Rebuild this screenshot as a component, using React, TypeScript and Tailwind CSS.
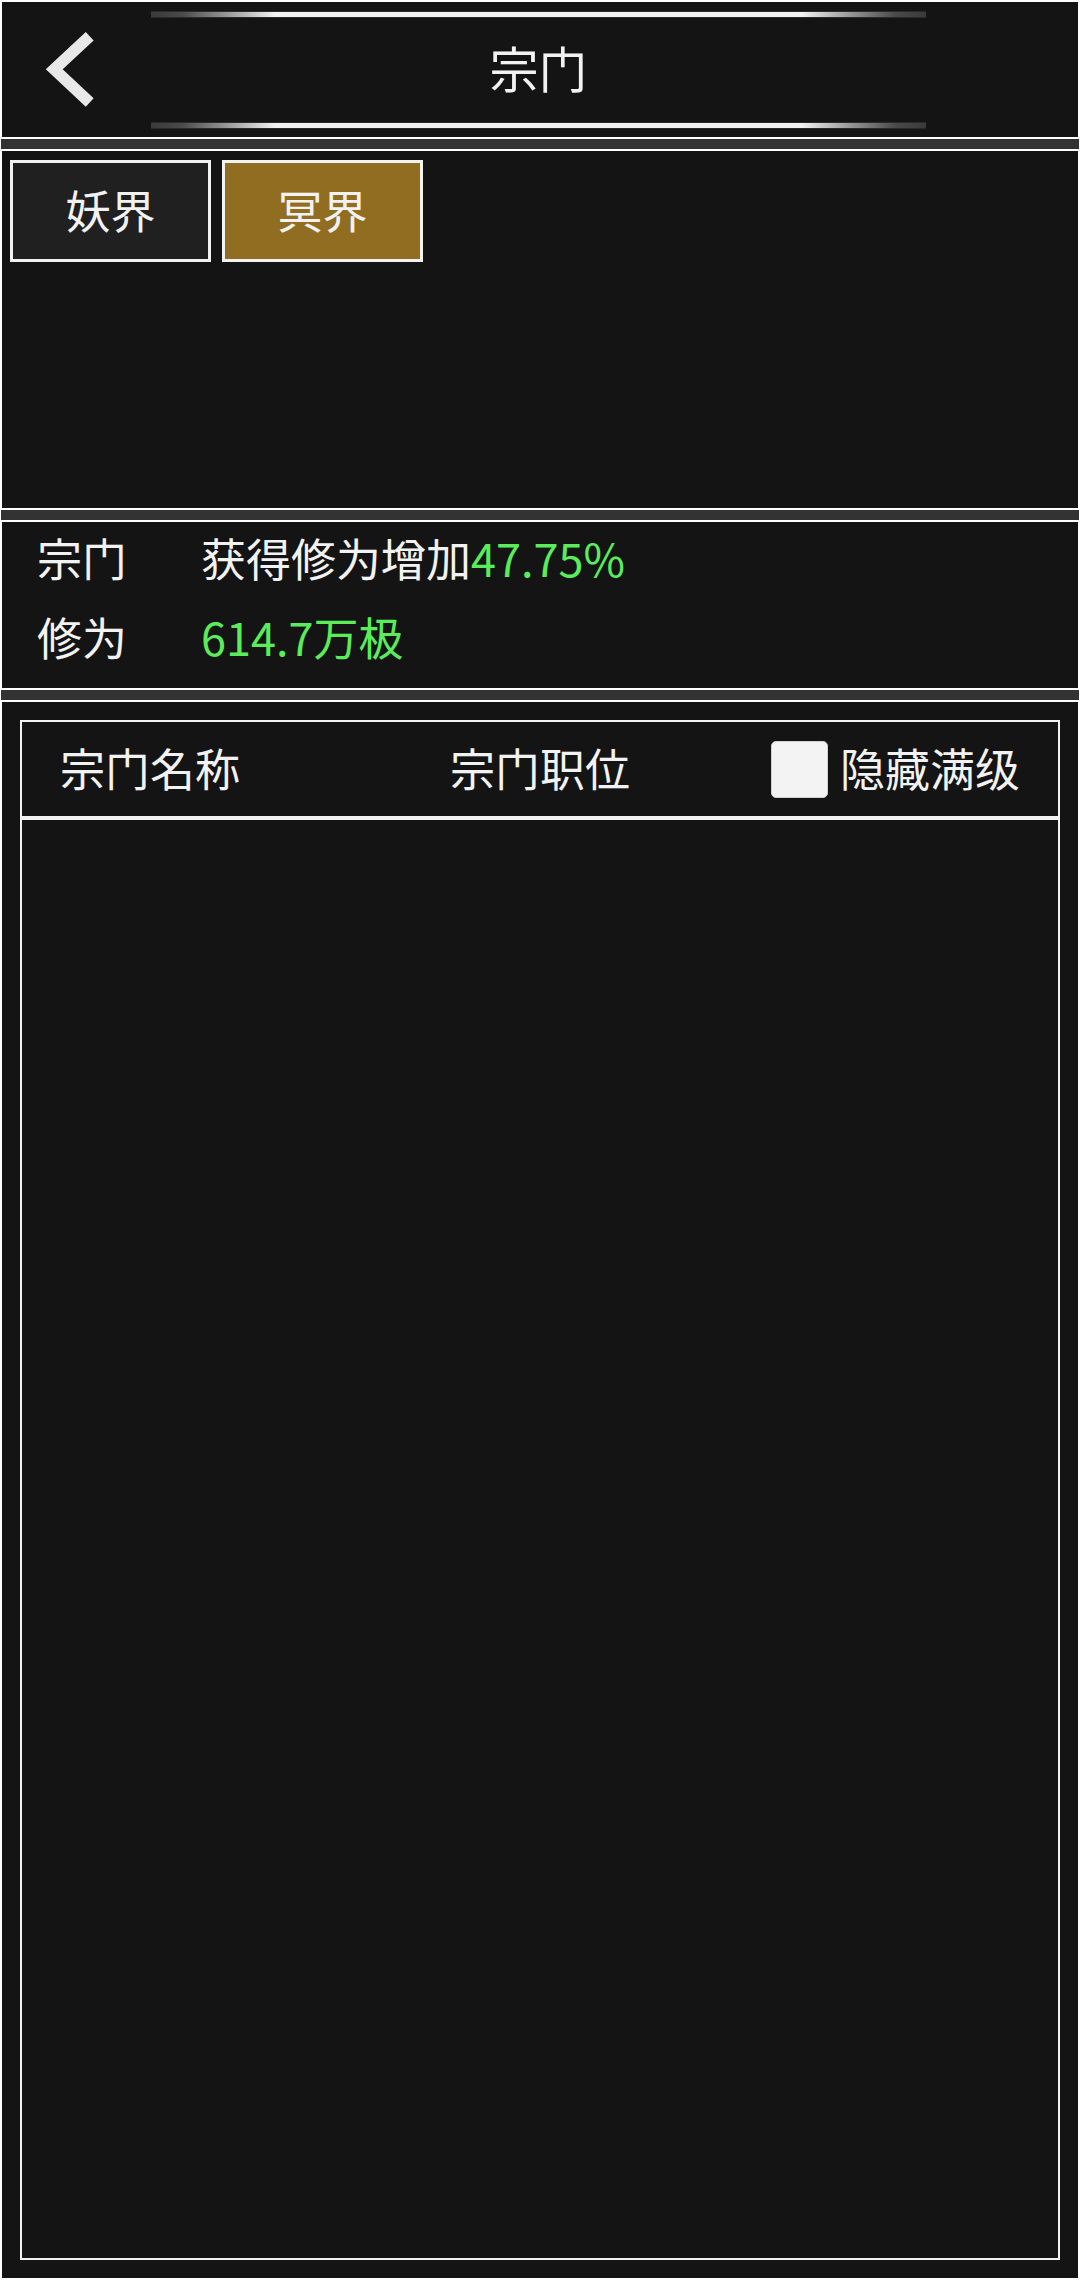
import React from "react";

function DecoLine() {
  return (
    <div className="h-[7px] w-full bg-[linear-gradient(to_right,#3a3a3a_0%,#4a4a4a_4%,#9a9a9a_10%,#f2f2f2_16%,#f2f2f2_84%,#9a9a9a_90%,#4a4a4a_96%,#3a3a3a_100%)] border-y border-[#2a2a2a]" />
  );
}

function GrayBar() {
  return <div className="h-[10px] -mx-px bg-[#333333]" />;
}

export default function App() {
  return (
    <div className="w-[1080px] h-[2280px] bg-white p-[2px] flex flex-col gap-[2px] text-[#f2f2f2] [font-family:'Noto_Sans_CJK_JP','Noto_Sans_CJK_SC',sans-serif]">
      {/* Header */}
      <div className="h-[135px] bg-[#141414] flex flex-row">
        <div className="w-[149px] h-full">
          <svg width="149" height="135" viewBox="0 0 149 135">
            <path
              d="M87.7 34.2 L52.2 67.3 L87.7 100.5"
              fill="none"
              stroke="#e8e8e8"
              strokeWidth="11.5"
              strokeLinecap="butt"
              strokeLinejoin="miter"
            />
          </svg>
        </div>
        <div className="w-[775px] h-full flex flex-col justify-between pt-[9px] pb-[8px]">
          <DecoLine />
          <div className="flex-1 flex items-center justify-center text-[49px] leading-none pb-[8px]">
            宗门
          </div>
          <DecoLine />
        </div>
      </div>

      <GrayBar />

      {/* Tabs panel */}
      <div className="h-[357px] bg-[#141414] pt-[9px] pl-[8px]">
        <div className="flex flex-row gap-[11px]">
          <div className="w-[201px] h-[102px] border-[3px] border-[#f2f2f2] bg-[#202020] flex items-center justify-center text-[45px] leading-none pb-[3px]">
            妖界
          </div>
          <div className="w-[201px] h-[102px] border-[3px] border-[#f2f2f2] bg-[#916d22] flex items-center justify-center text-[45px] leading-none pb-[3px]">
            冥界
          </div>
        </div>
      </div>

      <GrayBar />

      {/* Stats panel */}
      <div className="h-[166px] bg-[#141414] pl-[35px] text-[45px] leading-none">
        <div className="flex flex-row items-center h-[70px]">
          <div className="w-[164px]">宗门</div>
          <div>
            获得修为增加<span className="text-[#5aec5a]">47.75%</span>
          </div>
        </div>
        <div className="flex flex-row items-center h-[88px]">
          <div className="w-[164px]">修为</div>
          <div className="text-[#5aec5a]">614.7万极</div>
        </div>
      </div>

      <GrayBar />

      {/* List panel */}
      <div className="flex-1 bg-[#141414] p-[18px] flex flex-col">
        <div className="flex-1 border-2 border-[#f2f2f2] flex flex-col">
          <div className="h-[98px] border-b-[4px] border-[#f2f2f2] grid grid-cols-[1fr_auto_1fr] items-center px-[38px] text-[45px] leading-none">
            <div className="justify-self-start pb-[4px]">宗门名称</div>
            <div className="justify-self-center pb-[4px]">宗门职位</div>
            <div className="justify-self-end flex flex-row items-center gap-[12px]">
              <div className="w-[57px] h-[57px] rounded-[5px] bg-[#f3f3f3] border border-[#cfcfcf]" />
              <div className="pb-[4px]">隐藏满级</div>
            </div>
          </div>
          <div className="flex-1" />
        </div>
      </div>
    </div>
  );
}
